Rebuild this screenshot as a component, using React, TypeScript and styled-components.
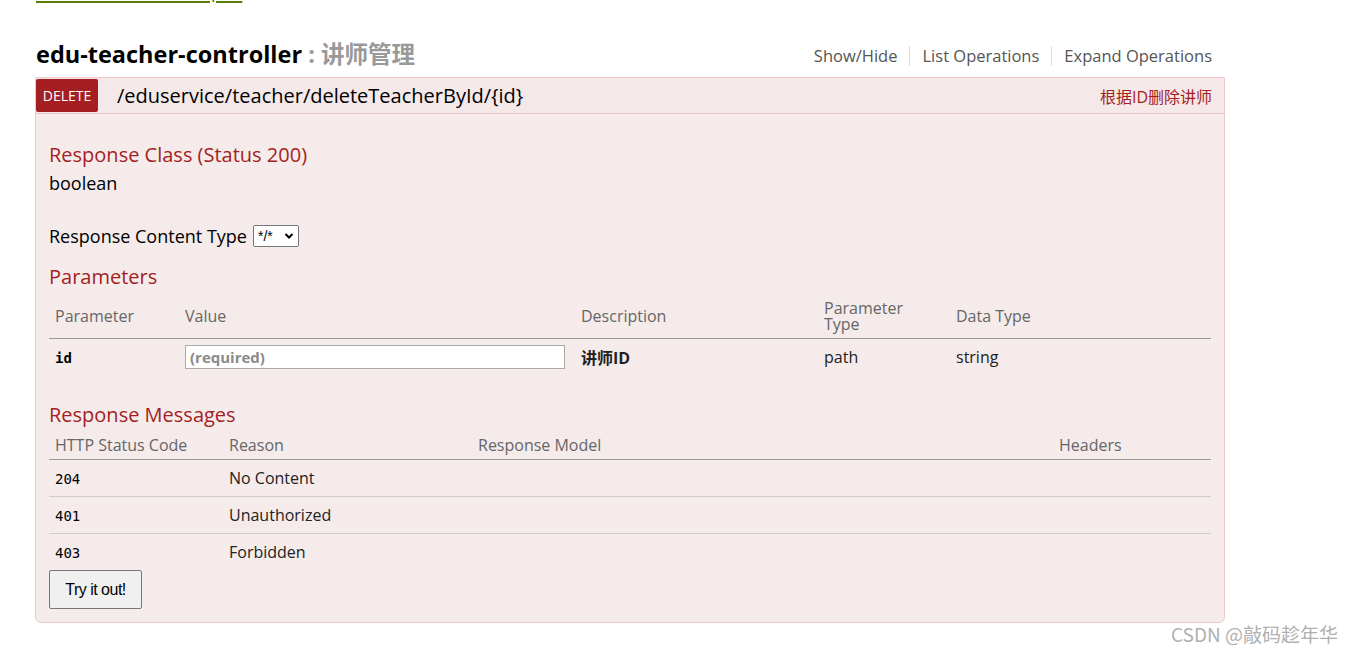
import React from 'react'
import styled, { createGlobalStyle } from 'styled-components'

const GlobalStyle = createGlobalStyle`
  html, body {
    margin: 0;
    padding: 0;
    background: #fff;
    font-family: "Open Sans", "Noto Sans CJK SC", sans-serif;
    overflow: hidden;
  }
`

const Page = styled.div`
  position: relative;
  display: flow-root;
  width: 1354px;
  height: 653px;
  padding: 0 129px 0 35px;
  box-sizing: border-box;
  overflow: hidden;
`

const ContactLink = styled.a`
  display: block;
  margin-top: -21px;
  margin-left: 1px;
  font-size: 20px;
  line-height: 22px;
  color: #547f00;
  text-decoration: underline;
  text-decoration-thickness: 2px;
  text-underline-offset: 4px;
`

const ResourceHead = styled.div`
  display: flex;
  align-items: center;
  justify-content: space-between;
  margin-top: 37px;
  height: 30px;
  padding-right: 13px;
`

const Title = styled.h2`
  margin: 0 0 0 1px;
  font-size: 23.5px;
  font-weight: 700;
  color: #000;
`

const Sub = styled.span`
  color: #999;
  font-weight: 700;
`

const Options = styled.ul`
  display: flex;
  list-style: none;
  margin: 5px 0 0;
  padding: 0;
`

const Option = styled.li<{ first?: boolean }>`
  font-size: 16.5px;
  color: #555;
  padding: 0 12px;
  border-left: ${p => (p.first ? 'none' : '1px solid #ddd')};
  line-height: 20px;
  &:last-child {
    padding-right: 0;
  }
`

const Operation = styled.div`
  margin-top: 9px;
  border: 1px solid #f0c8cb;
  border-radius: 0 0 6px 6px;
  background: #f5ebeb;
`

const OpHeading = styled.div`
  display: flex;
  align-items: center;
  height: 35px;
  background: #f5e8e8;
  border-bottom: 1px solid #e8c6c7;
`

const Method = styled.span`
  display: flex;
  align-items: center;
  justify-content: center;
  width: 62px;
  height: 33px;
  background: #a41e22;
  color: #fff;
  font-size: 14px;
  border-radius: 2px;
`

const Path = styled.span`
  margin-left: 19px;
  font-size: 20px;
  color: #000;
  flex: 1;
`

const Summary = styled.span`
  font-size: 16px;
  color: #a41e22;
  margin-right: 12px;
`

const Content = styled.div`
  padding: 29px 13px 13px 13px;
`

const SectionTitle = styled.h4<{ gap?: number }>`
  margin: ${p => p.gap ?? 0}px 0 0;
  font-size: 20px;
  line-height: 24px;
  font-weight: 400;
  color: #a41e22;
`

const Plain = styled.div<{ gap?: number }>`
  margin-top: ${p => p.gap ?? 0}px;
  font-size: 18px;
  line-height: 24px;
  color: #000;
  display: flex;
  align-items: center;
`

const FakeSelect = styled.span`
  display: inline-flex;
  align-items: center;
  justify-content: space-between;
  box-sizing: border-box;
  width: 46px;
  height: 22px;
  margin-left: 6px;
  padding: 0 4px;
  border: 1px solid #767676;
  border-radius: 2px;
  background: #fff;
  font-family: Arial, "Liberation Sans", sans-serif;
  font-size: 14px;
`

const Table = styled.table<{ gap?: number }>`
  width: 100%;
  margin-top: ${p => p.gap ?? 0}px;
  border-collapse: collapse;
  table-layout: fixed;
`

const Th = styled.th<{ w?: number; low?: boolean }>`
  box-sizing: border-box;
  width: ${p => (p.w ? `${p.w}px` : 'auto')};
  text-align: left;
  vertical-align: middle;
  font-weight: 400;
  font-size: 16px;
  color: #666;
  padding: 0 6px ${p => (p.low ? 1 : 5)}px;
  line-height: 16px;
  border-bottom: 1px solid #999;
`

const Td = styled.td`
  font-size: 16px;
  color: #222;
  padding: 0 6px;
  vertical-align: middle;
`

const Row = styled.tr<{ h: number; lined?: boolean }>`
  height: ${p => p.h}px;
  & > td {
    border-bottom: ${p => (p.lined ? '1px solid #ccc' : 'none')};
  }
`

const Code = styled.code<{ bold?: boolean }>`
  font-family: "DejaVu Sans Mono", monospace;
  font-size: 14px;
  font-weight: ${p => (p.bold ? 700 : 400)};
  color: #000;
`

const ValueInput = styled.input`
  box-sizing: border-box;
  width: 380px;
  height: 24px;
  border: 1px solid #aaa;
  padding: 0 4px;
  font-family: inherit;
  font-size: 15px;
  font-weight: 700;
  &::placeholder {
    color: #8a8a8a;
  }
`

const TryButton = styled.button`
  display: block;
  width: 93px;
  height: 39px;
  background: #f0f0f0;
  border: 1px solid #777;
  border-radius: 2px;
  font-family: "Liberation Sans", Arial, sans-serif;
  font-size: 16px;
  color: #000;
  letter-spacing: -0.5px;
`

const Watermark = styled.div`
  position: absolute;
  right: 16px;
  bottom: 6px;
  font-size: 19px;
  color: #b0b0b0;
  font-family: "Noto Sans CJK SC", sans-serif;
`

const messages = [
  { code: '204', reason: 'No Content' },
  { code: '401', reason: 'Unauthorized' },
  { code: '403', reason: 'Forbidden' },
]

export default function App() {
  return (
    <>
      <GlobalStyle />
      <Page>
        <ContactLink>Contact the developer</ContactLink>
        <ResourceHead>
          <Title>
            edu-teacher-controller <Sub>: 讲师管理</Sub>
          </Title>
          <Options>
            <Option first>Show/Hide</Option>
            <Option>List Operations</Option>
            <Option>Expand Operations</Option>
          </Options>
        </ResourceHead>
        <Operation>
          <OpHeading>
            <Method>DELETE</Method>
            <Path>/eduservice/teacher/deleteTeacherById/{'{id}'}</Path>
            <Summary>根据ID删除讲师</Summary>
          </OpHeading>
          <Content>
            <SectionTitle>Response Class (Status 200)</SectionTitle>
            <Plain gap={4}>boolean</Plain>
            <Plain gap={29}>
              Response Content Type
              <FakeSelect>
                */*
                <svg width="10" height="8" viewBox="0 0 10 8">
                  <path d="M1.5 2l3.5 3.5L8.5 2" fill="none" stroke="#000" strokeWidth="2" />
                </svg>
              </FakeSelect>
            </Plain>
            <SectionTitle gap={17}>Parameters</SectionTitle>
            <Table gap={11}>
              <thead>
                <tr style={{ height: 38 }}>
                  <Th w={130}>Parameter</Th>
                  <Th w={396}>Value</Th>
                  <Th w={243}>Description</Th>
                  <Th w={132}>
                    Parameter
                    <br />
                    Type
                  </Th>
                  <Th>Data Type</Th>
                </tr>
              </thead>
              <tbody>
                <Row h={38}>
                  <Td>
                    <Code bold>id</Code>
                  </Td>
                  <Td>
                    <ValueInput placeholder="(required)" />
                  </Td>
                  <Td style={{ fontWeight: 700 }}>讲师ID</Td>
                  <Td>path</Td>
                  <Td>string</Td>
                </Row>
              </tbody>
            </Table>
            <SectionTitle gap={27}>Response Messages</SectionTitle>
            <Table gap={6}>
              <thead>
                <tr style={{ height: 26 }}>
                  <Th w={174} low>HTTP Status Code</Th>
                  <Th w={249} low>Reason</Th>
                  <Th w={581} low>Response Model</Th>
                  <Th low>Headers</Th>
                </tr>
              </thead>
              <tbody>
                {messages.map((m, i) => (
                  <Row key={m.code} h={37} lined={i < messages.length - 1}>
                    <Td>
                      <Code>{m.code}</Code>
                    </Td>
                    <Td>{m.reason}</Td>
                    <Td />
                    <Td />
                  </Row>
                ))}
              </tbody>
            </Table>
            <TryButton>Try it out!</TryButton>
          </Content>
        </Operation>
        <Watermark>CSDN @敲码趁年华</Watermark>
      </Page>
    </>
  )
}
